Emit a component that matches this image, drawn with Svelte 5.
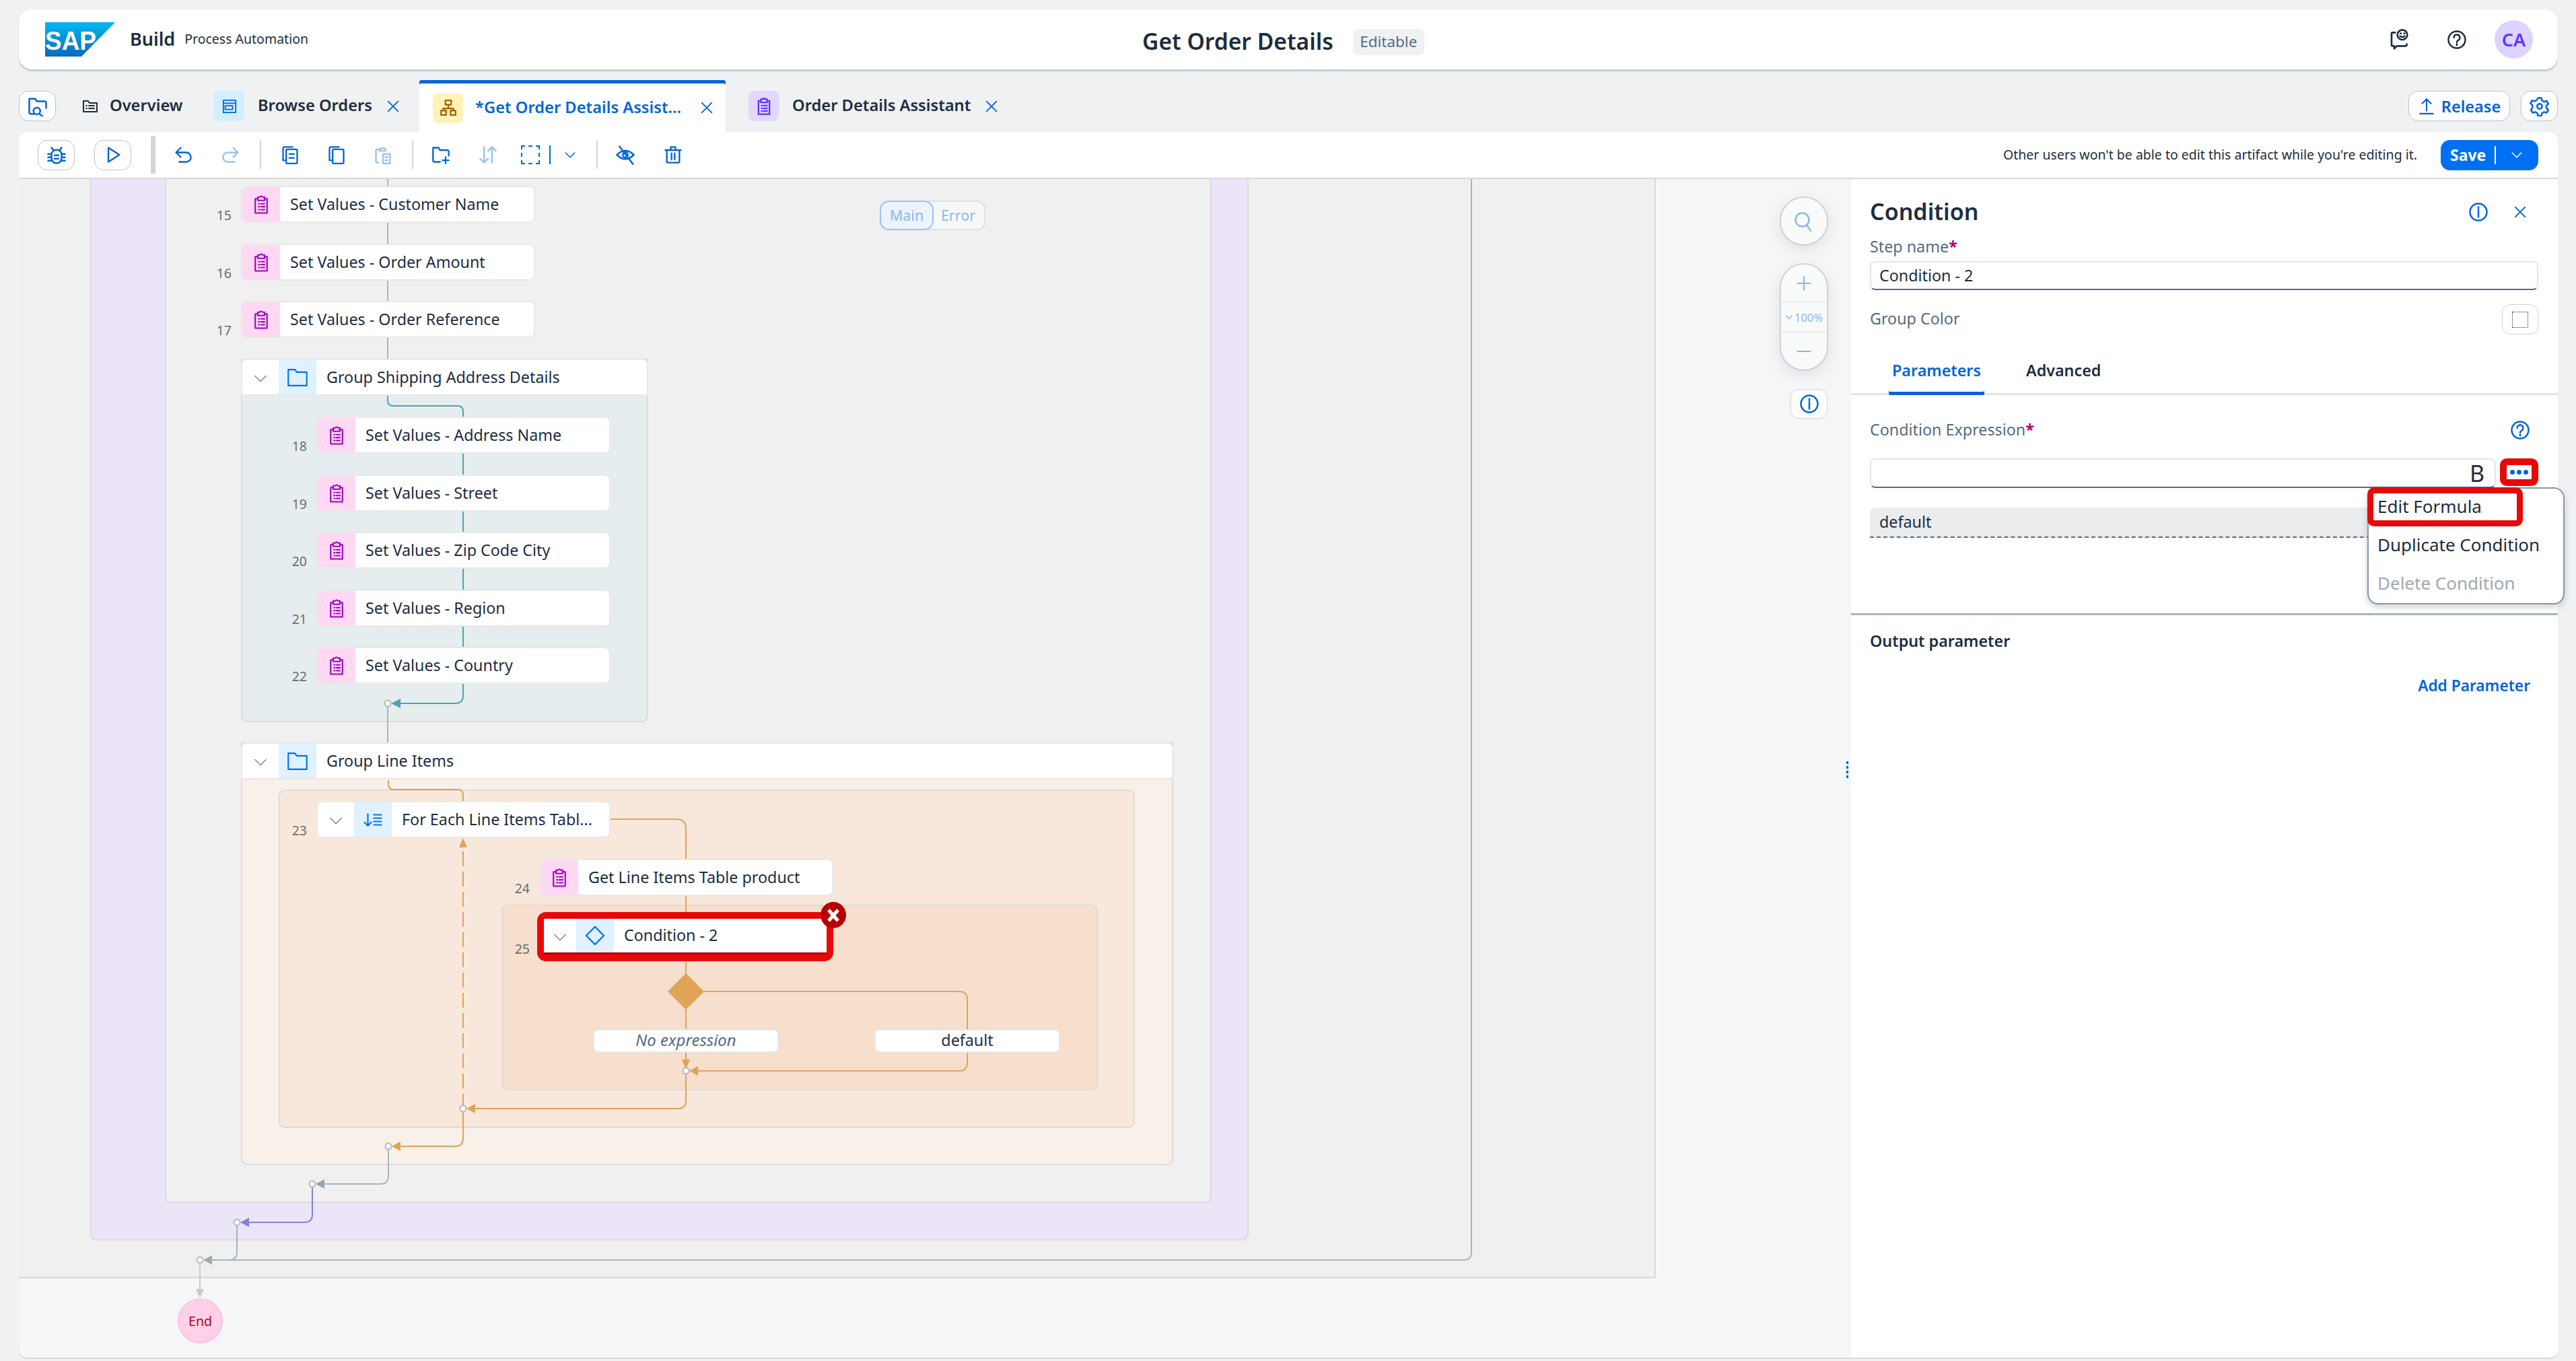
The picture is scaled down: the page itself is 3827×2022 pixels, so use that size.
<script lang="ts">
  // canvas coordinates are written in page pixels and shifted by this origin
  const ox = 28;
  const oy = 266;

  const icons: Record<string, string> = {
    clipboard: "M8 5H5v17h14V5h-3M8 3h2.500a1.600 1.600 0 0 1 3 0H16v4H8zM9 11h1M12 11h4M9 14.500h1M12 14.500h4M9 18h1M12 18h4",
    folder: "M1 21.500V2.500h8l2 3h12v16z",
    overview: "M2 20V4h7l2 3h11v13zM6 11h1M10 11h8M6 15h1M10 15h8",
    searchFolder: "M8 21H4q-2 0-2-2V3h7l2 3h9q2 0 2 2v6M15 17.500a4 4 0 1 1-8 0 4 4 0 0 1 8 0zM14 21l4 3",
    browser: "M2 2h20v20H2zM2 7h20M5 11h12v6H5z",
    hierarchy: "M8 2h8v6H8zM12 8v5M5 13h14v3M5 13v3M2 16h7v6H2zM15 16h7v6h-7z",
    close: "M4 4l16 16M20 4L4 20",
    chevron: "M3 8l9 9 9-9",
    bug: "M12 6a6 6 0 0 1 6 6v4a6 6 0 0 1-12 0v-4a6 6 0 0 1 6-6zM9.500 12.500h5M9.500 16.500h5M8 6L6 3.500M16 6l2-2.500M2 11h4M2 15h4M2 19h4M18 11h4M18 15h4M18 19h4",
    play: "M6 3l14 9-14 9z",
    undo: "M9 3L3 9l6 6M3 9h13a5 5 0 0 1 0 12H7",
    redo: "M15 3l6 6-6 6M21 9H8a5 5 0 0 0 0 12h9",
    copyText: "M5 19H3V4q0-2 2-2h10M8 5h12q1 0 1 1v16q0 1-1 1H8q-1 0-1-1V6q0-1 1-1zM11 11h6M11 16h6",
    copy: "M5 19H3V4q0-2 2-2h10M8 5h12q1 0 1 1v16q0 1-1 1H8q-1 0-1-1V6q0-1 1-1z",
    paste: "M8 5H4q-1 0-1 1v15q0 1 1 1h2M8 7h7V4h-2a2 2 0 0 0-3 0H8zM12 11h9v12h-9zM15 15h3M15 19h3",
    folderAdd: "M11 21H4q-2 0-2-2V3h7l2 3h9q2 0 2 2v5M18 15v8M14 19h8",
    sort: "M7 2v20M2 17l5 5 5-5M17 22V2M12 7l5-5 5 5",
    hide: "M2 12q10-10 20 0-10 10-20 0zM12 9a3 3 0 1 0 0 6 3 3 0 0 0 0-6zM5 2l16 21",
    trash: "M2 6h20M9 6V2h6v4M4 6v15q0 1 1 1h14q1 0 1-1V6M10 10v8M14 10v8",
    info: "M12 2a10 10 0 1 0 0 20 10 10 0 0 0 0-20zM12 10v8M12 6v2",
    help: "M12 2a10 10 0 1 0 0 20 10 10 0 0 0 0-20zM8.500 9.500a3.500 3.500 0 1 1 5 3.200q-1.500.8-1.500 2.300M12 17v1.500",
    feedback: "M7 4H4q-1 0-1 1v13q0 1 1 1h2v3l3-3h9q2 0 2-2M15 1a5.500 5.500 0 1 0 0 11 5.500 5.500 0 0 0 0-11zM13 5h.5M17 5h.5M12.500 8q2.500 2 5 0",
    upload: "M12 2v16M6 8l6-6 6 6M3 22h18",
    gear: "M10 2h4l.7 3 2.600 1.500 3-.9 2 3.400-2.300 2.100v3l2.300 2.100-2 3.400-3-.9-2.600 1.500-.7 3h-4l-.7-3-2.600-1.500-3 .9-2-3.400L3.400 13.500v-3L1.100 8.400l2-3.400 3 .9L8.700 4.400zM12 9a3 3 0 1 0 0 6 3 3 0 0 0 0-6z",
    search: "M10 2a8 8 0 1 0 0 16 8 8 0 0 0 0-16zM15 16l5 7",
    plus: "M12 3v18M3 12h18",
    minus: "M3 12h18",
    loop: "M6 5v14M2 15l4 4 4-4M13 6h9M13 10h9M13 14h9M13 18h9",
    diamond: "M12 1.500l10.500 10.500-10.500 10.500L1.500 12z",
  };

  const steps = [
    { n: 15, label: "Set Values - Customer Name", x: 358, y: 276 },
    { n: 16, label: "Set Values - Order Amount", x: 358, y: 362 },
    { n: 17, label: "Set Values - Order Reference", x: 358, y: 447 },
    { n: 18, label: "Set Values - Address Name", x: 470, y: 619 },
    { n: 19, label: "Set Values - Street", x: 470, y: 705 },
    { n: 20, label: "Set Values - Zip Code City", x: 470, y: 790 },
    { n: 21, label: "Set Values - Region", x: 470, y: 876 },
    { n: 22, label: "Set Values - Country", x: 470, y: 961 },
    { n: 24, label: "Get Line Items Table product", x: 801, y: 1276 },
  ];

  const lanes = [
    { c: "purple", x: 134, y: 266, w: 1721, h: 1577 },
    { c: "grey", x: 245, y: 266, w: 1555, h: 1521 },
    { c: "ship", x: 358, y: 533, w: 605, h: 540 },
    { c: "line", x: 358, y: 1103, w: 1385, h: 628 },
    { c: "each", x: 414, y: 1173, w: 1272, h: 503 },
    { c: "cond", x: 745, y: 1344, w: 886, h: 276 },
  ];

  const wires = [
    { c: "#a9b4be", d: "M576 266V533M576 1045V1103" },
    { c: "#4aa5b3", d: "M576 588v7q0 8 8 8H680q8 0 8 8V1017v16q0 12-12 12H590" },
    { c: "#e0a458", d: "M577 1159v6q0 8 8 8H680q8 0 8 8V1190" },
    { c: "#e0a458", d: "M907 1217H1005q14 0 14 14V1529M1019 1563V1591" },
    { c: "#e0a458", d: "M1046 1473H1425q12 0 12 12V1529M1437 1563V1579q0 12-12 12H1033" },
    { c: "#e0a458", d: "M1019 1591V1635q0 12-12 12H700" },
    { c: "#e0a458", d: "M688 1647V1691q0 12-12 12H590" },
    { c: "#a9b4be", d: "M577 1703V1747q0 12-12 12H477" },
    { c: "#8480d8", d: "M464 1759V1804q0 12-12 12H365" },
    { c: "#a9b4be", d: "M352 1816V1860q0 12-12 12H310M2186 266V1860q0 12-12 12H310" },
    { c: "#c9cbcc", d: "M297 1872V1916" },
  ];

  const arrows = [
    { c: "#4aa5b3", p: "581,1045 595,1038 595,1052" },
    { c: "#e0a458", p: "1024,1591 1037,1584 1037,1598" },
    { c: "#e0a458", p: "1019,1589 1013,1574 1025,1574" },
    { c: "#e0a458", p: "693,1647 706,1640 706,1654" },
    { c: "#e0a458", p: "688,1245 682,1259 694,1259" },
    { c: "#e0a458", p: "582,1703 595,1696 595,1710" },
    { c: "#98a3ad", p: "469,1759 482,1752 482,1766" },
    { c: "#8480d8", p: "357,1816 370,1809 370,1823" },
    { c: "#a3abb2", p: "302,1872 315,1865 315,1879" },
    { c: "#c9cbcc", p: "297,1929 291,1915 303,1915" },
  ];

  const joints = [
    [576, 1045],
    [1019, 1591],
    [688, 1647],
    [577, 1703],
    [464, 1759],
    [352, 1816],
    [297, 1872],
  ];
</script>

{#snippet icon(name, size = 24, cls = "")}
  <svg class="ic {cls}" width={size} height={size} viewBox="0 0 24 24"><path d={icons[name]} /></svg>
{/snippet}

{#snippet head(label, name)}
  <span class="fold">{@render icon("chevron", 22, "thin")}</span>
  <span class="tile azure">{@render icon(name, 30, "fine")}</span>
  <span class="node-label">{label}</span>
{/snippet}

<div class="page">
  <header class="shell">
    <div class="brand">
      <svg class="logo" width="104" height="51" viewBox="0 0 104 51">
        <defs>
          <linearGradient id="sap" x1="0" y1="0" x2="0" y2="1">
            <stop offset="0" stop-color="#00b8f1" />
            <stop offset="1" stop-color="#0a6ab8" />
          </linearGradient>
        </defs>
        <polygon points="0,0 104,0 54,51 0,51" fill="url(#sap)" />
        <text x="0" y="41" textLength="76" lengthAdjust="spacingAndGlyphs">SAP</text>
      </svg>
      <span class="build">Build</span>
      <span class="product">Process Automation</span>
    </div>
    <div class="title">
      <span class="title-name">Get Order Details</span>
      <span class="editable">Editable</span>
    </div>
    <div class="shell-actions">
      <span class="dark act-a">{@render icon("feedback", 32)}</span>
      <span class="dark act-b">{@render icon("help", 30)}</span>
      <span class="avatar">CA</span>
    </div>
  </header>

  <nav class="tabs">
    <button class="round-btn search-tab">{@render icon("searchFolder", 30)}</button>
    <div class="tab overview">
      <span class="dark">{@render icon("overview", 24)}</span>
      <span class="tab-text">Overview</span>
    </div>
    <div class="tab browse">
      <span class="tab-tile sky">{@render icon("browser", 22)}</span>
      <span class="tab-text">Browse Orders</span>
      <span class="tab-x">{@render icon("close", 22)}</span>
    </div>
    <div class="tab current">
      <span class="tab-tile sand">{@render icon("hierarchy", 26)}</span>
      <span class="tab-text">*Get Order Details Assist...</span>
      <span class="tab-x">{@render icon("close", 22)}</span>
    </div>
    <div class="tab assistant">
      <span class="tab-tile lilac">{@render icon("clipboard", 28)}</span>
      <span class="tab-text">Order Details Assistant</span>
      <span class="tab-x">{@render icon("close", 22)}</span>
    </div>
    <div class="tabs-end">
      <button class="round-btn release">{@render icon("upload", 26)}<span>Release</span></button>
      <button class="round-btn gear">{@render icon("gear", 30)}</button>
    </div>
  </nav>

  <div class="toolbar">
    <button class="round-btn tool-box">{@render icon("bug", 30)}</button>
    <button class="round-btn tool-box play">{@render icon("play", 28)}</button>
    <span class="thick-sep"></span>
    <span class="tb" style="--w:68px">{@render icon("undo", 28)}</span>
    <span class="tb off" style="--w:74px">{@render icon("redo", 28)}</span>
    <span class="sep first"></span>
    <span class="tb" style="--w:86px">{@render icon("copyText", 28)}</span>
    <span class="tb" style="--w:52px">{@render icon("copy", 28)}</span>
    <span class="tb off" style="--w:86px">{@render icon("paste", 28)}</span>
    <span class="sep"></span>
    <span class="tb" style="--w:82px">{@render icon("folderAdd", 28)}</span>
    <span class="tb off" style="--w:58px">{@render icon("sort", 28)}</span>
    <span class="dashed"></span>
    <span class="mini-sep"></span>
    <span class="tb" style="--w:58px">{@render icon("chevron", 18)}</span>
    <span class="sep last"></span>
    <span class="tb" style="--w:82px">{@render icon("hide", 30)}</span>
    <span class="tb" style="--w:60px">{@render icon("trash", 28)}</span>
    <span class="lock-note">Other users won't be able to edit this artifact while you're editing it.</span>
    <button class="save"><span>Save</span><i></i>{@render icon("chevron", 18)}</button>
  </div>

  <div class="workspace">
    <section class="canvas">
      <div class="board"></div>

      {#each lanes as lane}
        <div class="lane {lane.c}" style="left:{lane.x - ox}px;top:{lane.y - oy}px;width:{lane.w}px;height:{lane.h}px"></div>
      {/each}

      <svg class="wires" width="2722" height="1751" viewBox="{ox} {oy} 2722 1751">
        {#each wires as w}
          <path d={w.d} stroke={w.c} />
        {/each}
        <path d="M688 1647V1260" stroke="#e0a458" stroke-dasharray="22 8" />
        <polygon points="1019,1446 1046,1473 1019,1500 992,1473" fill="#e0a458" />
        {#each arrows as a}
          <polygon points={a.p} fill={a.c} />
        {/each}
        {#each joints as j}
          <circle cx={j[0]} cy={j[1]} r="4.500" fill="#fff" stroke="#b5b9bd" stroke-width="2" />
        {/each}
      </svg>

      <div class="toggle">
        <span class="on">Main</span>
        <span>Error</span>
      </div>

      {#each steps as s}
        <span class="num" style="left:{s.x - ox - 60}px;top:{s.y - oy + 30}px">{s.n}</span>
        <div class="node" style="left:{s.x - ox}px;top:{s.y - oy}px">
          <span class="tile pink">{@render icon("clipboard", 30, "fine")}</span>
          <span class="node-label">{s.label}</span>
        </div>
      {/each}

      <div class="node group" style="left:{358 - ox}px;top:{533 - oy}px;width:605px">
        {@render head("Group Shipping Address Details", "folder")}
      </div>
      <div class="node group" style="left:{358 - ox}px;top:{1103 - oy}px;width:1385px">
        {@render head("Group Line Items", "folder")}
      </div>

      <span class="num" style="left:{470 - ox - 60}px;top:{1190 - oy + 30}px">23</span>
      <div class="node" style="left:{470 - ox}px;top:{1190 - oy}px">
        {@render head("For Each Line Items Tabl...", "loop")}
      </div>

      <span class="num" style="left:{801 - ox - 60}px;top:{1370 - oy + 26}px">25</span>
      <div class="flagged" style="left:{798 - ox}px;top:{1355 - oy}px">
        <div class="flagged-inner">{@render head("Condition - 2", "diamond")}</div>
        <span class="flag-err"><svg width="24" height="26" viewBox="0 0 24 24"><path d="M5 4l14 16M19 4L5 20" /></svg></span>
      </div>

      <div class="branch italic" style="left:{881 - ox}px;top:{1529 - oy}px">No expression</div>
      <div class="branch" style="left:{1299 - ox}px;top:{1529 - oy}px">default</div>

      <div class="end" style="left:{264 - ox}px;top:{1929 - oy}px">End</div>

      <div class="zoom-tools">
        <button class="pill-btn">{@render icon("search", 30)}</button>
        <div class="pill-btn stack">
          <span class="z-row">{@render icon("plus", 26)}</span>
          <span class="z-row z-mid"><svg width="12" height="12" viewBox="0 0 24 24"><path d="M3 8l9 9 9-9" /></svg>100%</span>
          <span class="z-row">{@render icon("minus", 26)}</span>
        </div>
        <button class="info-btn">{@render icon("info", 30)}</button>
      </div>

      <span class="grip"><b></b><b></b><b></b><b></b></span>
    </section>

    <aside class="panel">
      <div class="sec">
        <div class="panel-head">
          <h2>Condition</h2>
          <span class="blue">{@render icon("info", 30)}</span>
          <span class="blue">{@render icon("close", 22)}</span>
        </div>
        <div class="lbl step-lbl">Step name<em>*</em></div>
        <div class="field">Condition - 2</div>
        <div class="color-row">
          <span class="lbl">Group Color</span>
          <button class="swatch"><i></i></button>
        </div>
      </div>

      <div class="ptabs">
        <span class="ptab active">Parameters</span>
        <span class="ptab adv">Advanced</span>
      </div>

      <div class="sec">
        <div class="expr-lbl">
          <span class="lbl">Condition Expression<em>*</em></span>
          <span class="blue">{@render icon("help", 30)}</span>
        </div>
        <div class="expr-row">
          <div class="field expr"><span class="b-mark">B</span></div>
          <button class="dots"><b></b><b></b><b></b></button>
        </div>
        <div class="default-row">default</div>
      </div>

      <div class="out-rule"></div>
      <div class="sec">
        <div class="out-title">Output parameter</div>
        <div class="add-param">Add Parameter</div>
      </div>

      <div class="menu">
        <div class="menu-item marked">Edit Formula</div>
        <div class="menu-item">Duplicate Condition</div>
        <div class="menu-item disabled">Delete Condition</div>
      </div>
    </aside>
  </div>
</div>

<style>
  :global(body) {
    margin: 0;
    background: #eff1f2;
  }

  .page {
    --ui: "Noto Sans", "Open Sans", sans-serif;
    --blue: #0064d9;
    --ink: #1d2d3e;
    --muted: #556b82;
    width: 3827px;
    height: 2022px;
    box-sizing: border-box;
    padding: 14px 27px 5px 28px;
    display: flex;
    flex-direction: column;
    font-family: var(--ui);
    font-size: 23.300px;
    color: var(--ink);
    overflow: hidden;
  }

  button {
    font-family: inherit;
    padding: 0;
    color: var(--blue);
  }

  .ic {
    display: block;
    flex: none;
    fill: none;
    stroke: currentColor;
    stroke-width: 2;
    stroke-linejoin: round;
    stroke-linecap: round;
  }
  .ic.thin {
    stroke-width: 1.300;
  }
  .ic.fine {
    stroke-width: 1.700;
  }

  /* shell bar */
  .shell {
    height: 89px;
    flex: none;
    background: #fff;
    border-radius: 20px;
    box-shadow: 0 3px 2px rgba(85, 107, 130, 0.28);
    position: relative;
    display: flex;
    align-items: center;
    justify-content: space-between;
  }
  .brand {
    display: flex;
    align-items: center;
    padding-left: 39px;
  }
  .logo text {
    font-family: "Liberation Sans", sans-serif;
    font-weight: 700;
    font-size: 39px;
    fill: #fff;
  }
  .build {
    margin-left: 22px;
    font-size: 27px;
    font-weight: 600;
    padding-bottom: 3px;
  }
  .product {
    margin-left: 14px;
    font-size: 19.500px;
    padding-bottom: 2px;
  }
  .title {
    position: absolute;
    left: 1669px;
    top: 24px;
    display: flex;
    align-items: center;
    gap: 29px;
  }
  .title-name {
    font-size: 33.600px;
    font-weight: 600;
    padding-bottom: 3px;
  }
  .editable {
    width: 106px;
    height: 39px;
    display: flex;
    align-items: center;
    justify-content: center;
    background: #eff1f2;
    border-radius: 8px;
    font-size: 22.500px;
    color: var(--muted);
    padding-bottom: 2px;
    box-sizing: border-box;
  }
  .shell-actions {
    display: flex;
    align-items: center;
    padding-right: 37px;
  }
  .dark {
    color: var(--ink);
    display: block;
  }
  .act-b {
    margin-left: 54px;
  }
  .avatar {
    margin-left: 41px;
    width: 57px;
    height: 57px;
    border-radius: 50%;
    background: #ded3ff;
    color: #5d36ff;
    font-weight: 600;
    font-size: 27px;
    display: flex;
    align-items: center;
    justify-content: center;
  }

  /* tab strip */
  .tabs {
    margin-top: 16px;
    height: 77px;
    flex: none;
    display: flex;
    font-weight: 600;
    font-size: 23.700px;
  }
  .round-btn {
    background: #fff;
    border: 1.500px solid #bcc3ca;
    border-radius: 14px;
    box-sizing: border-box;
    height: 45px;
    display: flex;
    align-items: center;
    justify-content: center;
  }
  .search-tab {
    width: 55px;
    margin-top: 16px;
    flex: none;
  }
  .tab {
    display: flex;
    align-items: center;
    box-sizing: border-box;
    flex: none;
  }
  .tab-text {
    padding-bottom: 3px;
    white-space: nowrap;
  }
  .overview {
    margin-left: 39px;
    width: 196px;
    gap: 17px;
  }
  .browse {
    width: 305px;
    gap: 20px;
  }
  .browse .tab-x {
    margin-right: 31px;
  }
  .current {
    width: 455px;
    padding: 5px 0 0 20px;
    gap: 18px;
    background: #fff;
    box-shadow: inset 0 5px 0 var(--blue);
    border-radius: 3px 3px 0 0;
    color: var(--blue);
  }
  .assistant {
    margin-left: 34px;
    width: 372px;
    gap: 20px;
  }
  .assistant .tab-x {
    margin-right: 5px;
  }
  .tab-tile {
    width: 45px;
    height: 45px;
    border-radius: 8px;
    display: flex;
    align-items: center;
    justify-content: center;
    flex: none;
  }
  .tab-tile.sky {
    background: #d1efff;
    color: #0064d9;
  }
  .tab-tile.sand {
    background: #fff3b8;
    color: #a45d00;
  }
  .tab-tile.lilac {
    background: #e2d8ff;
    color: #5d36ff;
  }
  .tab-x {
    color: var(--blue);
    margin-left: auto;
    margin-right: 17px;
  }
  .tabs-end {
    margin-left: auto;
    display: flex;
    align-items: flex-start;
    gap: 16px;
    padding-top: 16px;
  }
  .release {
    width: 151px;
    gap: 9px;
    font-weight: 600;
    font-size: 23.500px;
  }
  .gear {
    width: 55px;
  }

  /* toolbar */
  .toolbar {
    height: 70px;
    flex: none;
    background: #fff;
    box-sizing: border-box;
    border-bottom: 2px solid #d9d9d9;
    border-radius: 14px 14px 0 0;
    display: flex;
    align-items: center;
    padding: 0 29px 0 28px;
    color: var(--blue);
  }
  .tool-box {
    width: 55px;
    flex: none;
  }
  .tool-box.play {
    margin-left: 29px;
  }
  .thick-sep {
    width: 7px;
    height: 56px;
    background: #d5d5d5;
    margin: 0 7px 0 29px;
    flex: none;
  }
  .sep {
    width: 2px;
    height: 42px;
    background: #d5d5d5;
    flex: none;
  }
  .sep.first {
    margin-left: 6px;
  }
  .sep.last {
    margin-left: 10px;
  }
  .mini-sep {
    width: 2px;
    height: 28px;
    background: var(--blue);
    margin-left: 14px;
    flex: none;
  }
  .tb {
    width: var(--w);
    display: flex;
    justify-content: center;
    flex: none;
  }
  .off {
    color: #99c1f0;
  }
  .dashed {
    width: 28px;
    height: 28px;
    box-sizing: border-box;
    border: 2px dashed var(--blue);
    margin-left: 20px;
    flex: none;
  }
  .lock-note {
    margin-left: auto;
    font-size: 19.500px;
    color: var(--ink);
    padding-bottom: 2px;
  }
  .save {
    margin-left: 35px;
    width: 145px;
    height: 45px;
    border: none;
    border-radius: 14px;
    background: #0070f2;
    color: #fff;
    font-weight: 700;
    font-size: 23px;
    display: flex;
    align-items: center;
    padding-left: 14px;
    box-sizing: border-box;
  }
  .save i {
    width: 2px;
    height: 27px;
    background: #fff;
    margin: 0 22px 0 13px;
  }

  /* workspace */
  .workspace {
    flex: 1;
    min-height: 0;
    display: flex;
    border-radius: 0 0 12px 12px;
    background: #f5f6f7;
    box-shadow: 0 2px 0 #d9d9d9;
  }
  .canvas {
    position: relative;
    flex: 1;
    min-width: 0;
  }
  .board {
    position: absolute;
    left: 0;
    top: 0;
    width: 2432px;
    height: 1633px;
    background: #f0f0f0;
    border-right: 2px solid #d9d9d9;
    border-bottom: 2px solid #d9d9d9;
    box-sizing: border-box;
  }
  .lane {
    position: absolute;
    box-sizing: border-box;
    border: 2px solid #dcdcdc;
    border-radius: 0 0 9px 9px;
  }
  .lane.purple {
    background: #ece5f7;
    border-top: none;
  }
  .lane.grey {
    background: #f0f0f0;
    border-top: none;
  }
  .lane.ship {
    background: #e6edee;
  }
  .lane.line {
    background: #f8f0e9;
  }
  .lane.each {
    background: #f7e8db;
    border-radius: 9px;
  }
  .lane.cond {
    background: #f6dfcd;
    border-radius: 9px;
  }
  .wires {
    position: absolute;
    left: 0;
    top: 0;
    fill: none;
    stroke-width: 2;
  }

  .node {
    position: absolute;
    width: 437px;
    height: 55px;
    box-sizing: border-box;
    background: #fff;
    border: 2px solid #e8e8e8;
    border-radius: 8px;
    display: flex;
    align-items: stretch;
    overflow: hidden;
  }
  .node.group {
    border-radius: 8px 8px 0 0;
  }
  .fold {
    width: 54px;
    display: flex;
    align-items: center;
    justify-content: center;
    color: #556b82;
    flex: none;
    padding-top: 3px;
    box-sizing: border-box;
  }
  .tile {
    width: 56px;
    flex: none;
    display: flex;
    align-items: center;
    justify-content: center;
  }
  .tile.pink {
    background: #ffd9f3;
    color: #a100c2;
  }
  .tile.azure {
    background: #e0f2ff;
    color: #0070f2;
  }
  .node-label {
    align-self: center;
    padding: 0 0 2px 15px;
    white-space: nowrap;
  }
  .num {
    position: absolute;
    width: 46px;
    text-align: right;
    font-size: 19.500px;
    line-height: 28px;
    color: #6a6d70;
  }

  .flagged {
    position: absolute;
    width: 440px;
    height: 73px;
    box-sizing: border-box;
    border: 10px solid #e90808;
    border-radius: 13px;
  }
  .flagged-inner {
    height: 53px;
    box-sizing: border-box;
    background: #fff;
    border-bottom: 3px solid #b00000;
    display: flex;
    align-items: stretch;
  }
  .flagged-inner .fold {
    width: 48px;
  }
  .flag-err {
    position: absolute;
    right: -29px;
    top: -25px;
    width: 38px;
    height: 39px;
    border-radius: 50%;
    background: #b90000;
    display: flex;
    align-items: center;
    justify-content: center;
  }
  .flag-err path {
    stroke: #fff;
    stroke-width: 5;
    fill: none;
  }

  .branch {
    position: absolute;
    width: 276px;
    height: 35px;
    box-sizing: border-box;
    background: #fff;
    border: 2px solid #e8e8e8;
    border-radius: 8px;
    display: flex;
    align-items: center;
    justify-content: center;
    padding-bottom: 4px;
  }
  .branch.italic {
    font-style: italic;
    font-size: 24px;
    color: #556b82;
  }

  .end {
    position: absolute;
    width: 67px;
    height: 67px;
    box-sizing: border-box;
    border-radius: 50%;
    background: #ffd0e7;
    border: 2px solid #ffc2de;
    color: #aa0808;
    font-size: 19.500px;
    display: flex;
    align-items: center;
    justify-content: center;
  }

  .toggle {
    position: absolute;
    left: 1279px;
    top: 32px;
    width: 157px;
    height: 44px;
    box-sizing: border-box;
    display: flex;
    background: #f7f7f7;
    border: 2px solid #dfe0e2;
    border-radius: 12px;
    font-size: 21.500px;
    color: #8ab8ef;
  }
  .toggle span {
    flex: 1;
    display: flex;
    align-items: center;
    justify-content: center;
    padding-bottom: 2px;
    box-sizing: border-box;
  }
  .toggle .on {
    background: #ecf3fa;
    box-shadow: 0 0 0 2px #9cc3f2;
    border-radius: 12px;
    flex: none;
    width: 76px;
  }

  .zoom-tools {
    position: absolute;
    left: 2616px;
    top: 26px;
    display: flex;
    flex-direction: column;
    color: #8ab8ef;
  }
  .pill-btn {
    width: 72px;
    height: 73px;
    box-sizing: border-box;
    border: 2px solid #cfd3d7;
    border-radius: 36px;
    background: #f9fafa;
    color: #8ab8ef;
    box-shadow: 0 6px 20px rgba(85, 107, 130, 0.14);
    display: flex;
    align-items: center;
    justify-content: center;
  }
  .stack {
    margin-top: 26px;
    height: 160px;
    flex-direction: column;
    align-items: stretch;
  }
  .z-row {
    flex: 1;
    display: flex;
    align-items: center;
    justify-content: center;
  }
  .z-mid {
    flex: none;
    height: 44px;
    gap: 2px;
    border-top: 1px solid #dfe2e5;
    border-bottom: 1px solid #dfe2e5;
    font-size: 16.500px;
  }
  .z-mid path {
    fill: none;
    stroke: currentColor;
    stroke-width: 3;
  }
  .info-btn {
    margin: 27px 0 0 16px;
    width: 55px;
    height: 44px;
    box-sizing: border-box;
    background: #fff;
    border: 1.500px solid #cfd3d7;
    border-radius: 12px;
    display: flex;
    align-items: center;
    justify-content: center;
  }
  .grip {
    position: absolute;
    left: 2715px;
    top: 865px;
    display: flex;
    flex-direction: column;
    gap: 3px;
  }
  .grip b {
    width: 3px;
    height: 4px;
    background: var(--blue);
  }

  /* side panel */
  .panel {
    width: 1050px;
    flex: none;
    background: #fff;
    position: relative;
    border-radius: 0 0 12px 0;
  }
  .sec {
    padding: 0 29px 0 28px;
  }
  .panel-head {
    display: flex;
    align-items: center;
    height: 40px;
    padding-top: 29px;
  }
  .panel-head h2 {
    margin: 0 auto 0 0;
    font-size: 34px;
    font-weight: 600;
    padding-bottom: 3px;
  }
  .panel-head .blue:last-child {
    margin: 0 16px 0 36px;
  }
  .blue {
    color: var(--blue);
    display: block;
  }
  .lbl {
    color: var(--muted);
  }
  .lbl em {
    font-style: normal;
    font-weight: 700;
    color: #b00066;
  }
  .step-lbl {
    margin-top: 18px;
    height: 28px;
    line-height: 26px;
  }
  .field {
    margin-top: 7px;
    height: 43px;
    box-sizing: border-box;
    border: 2px solid #e3e6e9;
    border-bottom-color: #556b82;
    border-radius: 8px;
    padding: 0 0 2px 12px;
    display: flex;
    align-items: center;
  }
  .color-row {
    margin-top: 21px;
    height: 45px;
    display: flex;
    align-items: center;
    justify-content: space-between;
  }
  .color-row .lbl {
    padding-bottom: 4px;
  }
  .swatch {
    width: 54px;
    height: 45px;
    box-sizing: border-box;
    background: #fff;
    border: 1.500px solid #cfd3d7;
    border-radius: 12px;
    display: flex;
    align-items: center;
    justify-content: center;
  }
  .swatch i {
    width: 24px;
    height: 24px;
    box-sizing: border-box;
    border: 1.500px dotted #1d2d3e;
  }
  .ptabs {
    margin-top: 25px;
    height: 65px;
    box-sizing: border-box;
    border-bottom: 3px solid #e3e6e9;
    padding-left: 56px;
    display: flex;
    font-weight: 600;
  }
  .ptab {
    height: 65px;
    box-sizing: border-box;
    display: flex;
    align-items: center;
    padding-bottom: 9px;
  }
  .ptab.active {
    width: 142px;
    justify-content: center;
    color: var(--blue);
    box-shadow: inset 0 -5px 0 var(--blue);
    border-radius: 0 0 2px 2px;
  }
  .ptab.adv {
    margin-left: 62px;
  }
  .expr-lbl {
    margin-top: 37px;
    height: 30px;
    display: flex;
    align-items: center;
    justify-content: space-between;
    padding-right: 12px;
  }
  .expr-lbl .lbl {
    padding-bottom: 3px;
  }
  .expr-row {
    margin-top: 27px;
    display: flex;
    gap: 6px;
  }
  .field.expr {
    margin: 0;
    flex: 1;
    height: 44px;
    justify-content: flex-end;
    padding: 0 15px 0 0;
  }
  .b-mark {
    font-size: 34px;
    line-height: 1;
  }
  .dots {
    width: 57px;
    height: 41px;
    box-sizing: border-box;
    border: 10px solid #e90808;
    border-radius: 10px;
    background: #fff;
    display: flex;
    align-items: center;
    justify-content: center;
    gap: 3px;
  }
  .dots b {
    width: 7px;
    height: 7px;
    border-radius: 50%;
    background: var(--blue);
  }
  .default-row {
    margin-top: 29px;
    height: 45px;
    box-sizing: border-box;
    background: #eaecee;
    border-bottom: 2px dashed #556b82;
    border-radius: 8px 8px 0 0;
    padding: 0 0 2px 14px;
    display: flex;
    align-items: center;
  }
  .out-rule {
    margin-top: 112px;
    height: 3px;
    background: #a9b4be;
  }
  .out-title {
    margin-top: 26px;
    height: 24px;
    line-height: 24px;
    font-weight: 600;
  }
  .add-param {
    margin-top: 39px;
    text-align: right;
    padding-right: 12px;
    color: var(--blue);
    font-weight: 600;
    font-size: 22.700px;
  }
  .menu {
    position: absolute;
    left: 767px;
    top: 458px;
    width: 293px;
    height: 174px;
    box-sizing: border-box;
    background: #fff;
    border: 2px solid #8a97a5;
    border-radius: 16px;
    box-shadow: 0 4px 10px rgba(85, 107, 130, 0.3);
    font-size: 26px;
  }
  .menu-item {
    height: 57px;
    box-sizing: border-box;
    display: flex;
    align-items: center;
    padding: 0 0 3px 13px;
    white-space: nowrap;
  }
  .menu-item.disabled {
    color: #a0a8b0;
  }
  .menu-item.marked {
    width: 231px;
    height: 58px;
    margin: -2px 0 0 -2px;
    padding: 0 0 3px 6px;
    border: 9px solid #e90808;
    border-radius: 10px;
    background: #fff;
  }
</style>
